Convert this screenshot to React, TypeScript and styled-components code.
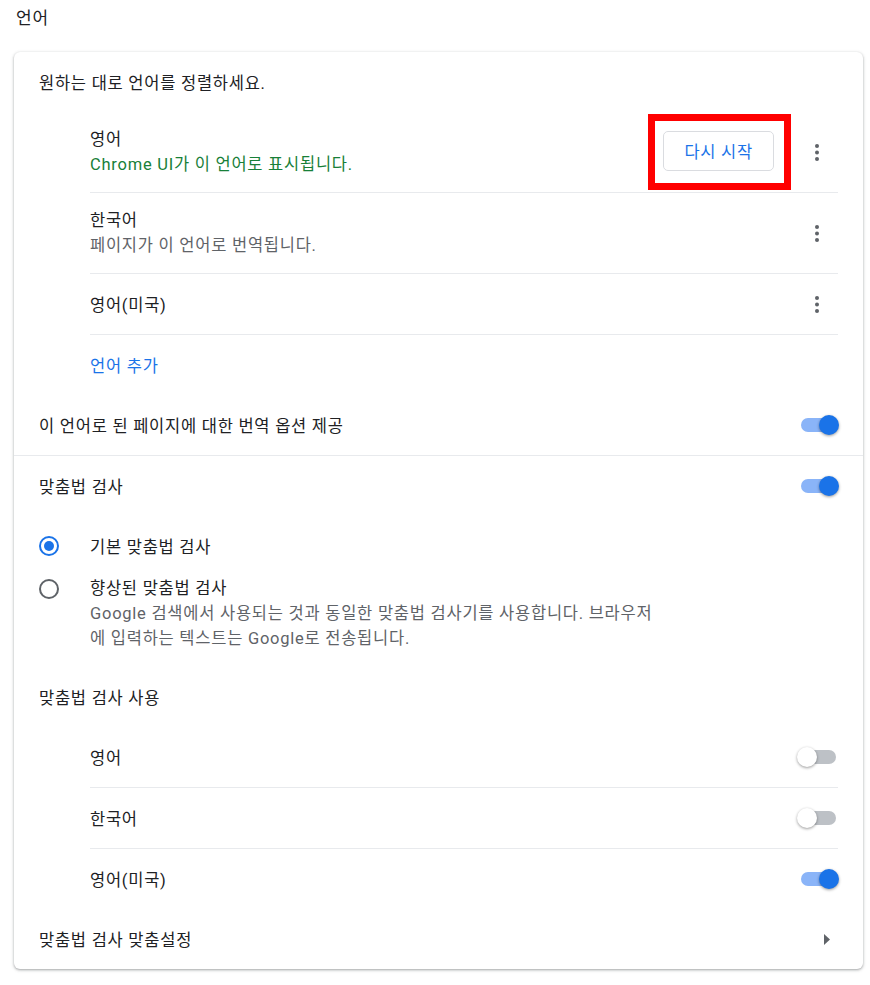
import React from 'react';
import styled, { createGlobalStyle } from 'styled-components';

const GlobalStyle = createGlobalStyle`
  body {
    margin: 0;
    background: #ffffff;
    font-family: Roboto, "Noto Sans CJK KR", sans-serif;
    color: #202124;
    letter-spacing: 0.75px;
  }
`;

const Page = styled.div`
  width: 870px;
  padding-bottom: 15px;
`;

const Title = styled.h2`
  margin: 0 0 16px;
  padding: 6px 16px;
  font-size: 17px;
  font-weight: 400;
  line-height: 24px;
`;

const Card = styled.section`
  margin-left: 14px;
  width: 849px;
  background: #fff;
  border-radius: 6px;
  box-shadow: 0 1px 2px 0 rgba(60, 64, 67, 0.3), 0 1px 3px 1px rgba(60, 64, 67, 0.15);
  overflow: hidden;
`;

const Row = styled.div<{ $divider?: boolean }>`
  display: flex;
  align-items: center;
  min-height: 60px;
  padding: 0 25px;
  font-size: 16.5px;
  border-top: ${p => (p.$divider ? '1px solid #e8eaed' : 'none')};
`;

const Grow = styled.div`
  flex: 1;
`;

const List = styled.div`
  padding: 0 25px 0 76px;
`;

const Item = styled.div<{ $divider?: boolean; $tall?: boolean }>`
  display: flex;
  align-items: center;
  min-height: ${p => (p.$tall ? '80px' : '60px')};
  font-size: 16.5px;
  border-top: ${p => (p.$divider ? '1px solid #e8eaed' : 'none')};
`;

const Primary = styled.div`
  line-height: 25px;
`;

const Secondary = styled.div<{ $tone?: 'green' | 'grey' }>`
  line-height: 25px;
  color: ${p => (p.$tone === 'green' ? '#188038' : '#5f6368')};
`;

const Link = styled.a`
  color: #1a73e8;
  text-decoration: none;
  cursor: pointer;
`;

const Highlight = styled.span`
  display: inline-flex;
  border: 7px solid #ff0000;
  padding: 10px 10px 12px 8px;
  margin-right: 5px;
`;

const OutlineButton = styled.button`
  height: 40px;
  padding: 0 20px;
  border: 1px solid #dadce0;
  border-radius: 5px;
  background: #fff;
  color: #1a73e8;
  font-family: inherit;
  font-size: 16.5px;
  letter-spacing: 0.75px;
  cursor: pointer;
`;

const IconButton = styled.button`
  width: 42px;
  height: 42px;
  display: flex;
  align-items: center;
  justify-content: center;
  border: none;
  background: none;
  padding: 0;
  cursor: pointer;
`;

const ToggleWrap = styled.span`
  position: relative;
  display: inline-block;
  width: 42px;
  height: 20px;
  margin-right: -1px;
`;

const Track = styled.span<{ $on: boolean }>`
  position: absolute;
  left: 4px;
  top: 3px;
  width: 35px;
  height: 14px;
  border-radius: 7px;
  background: ${p => (p.$on ? '#8ab4f8' : '#bdc1c6')};
`;

const Knob = styled.span<{ $on: boolean }>`
  position: absolute;
  top: 0;
  left: ${p => (p.$on ? '22px' : '0')};
  width: 20px;
  height: 20px;
  border-radius: 50%;
  background: ${p => (p.$on ? '#1a73e8' : '#ffffff')};
  box-shadow: 0 1px 3px rgba(0, 0, 0, 0.4);
`;

const RadioRow = styled.div<{ $multi?: boolean }>`
  display: flex;
  align-items: ${p => (p.$multi ? 'flex-start' : 'center')};
  min-height: 60px;
  padding: ${p => (p.$multi ? '0 25px 16px' : '0 25px')};
  font-size: 16.5px;
`;

const RadioCol = styled.div<{ $multi?: boolean }>`
  width: 51px;
  flex-shrink: 0;
  display: flex;
  align-items: center;
  height: ${p => (p.$multi ? '25px' : 'auto')};
`;

const RadioCircle = styled.span<{ $checked: boolean }>`
  box-sizing: border-box;
  width: 20px;
  height: 20px;
  border-radius: 50%;
  border: 2.5px solid ${p => (p.$checked ? '#1a73e8' : '#5f6368')};
  display: flex;
  align-items: center;
  justify-content: center;
  &::after {
    content: '';
    width: 10px;
    height: 10px;
    border-radius: 50%;
    background: ${p => (p.$checked ? '#1a73e8' : 'transparent')};
  }
`;

const Toggle = ({ on }: { on: boolean }) => (
  <ToggleWrap>
    <Track $on={on} />
    <Knob $on={on} />
  </ToggleWrap>
);

const MoreIcon = () => (
  <IconButton aria-label="더보기">
    <svg width="4" height="17" viewBox="0 0 4 17">
      <circle cx="2" cy="2" r="2" fill="#5f6368" />
      <circle cx="2" cy="8.5" r="2" fill="#5f6368" />
      <circle cx="2" cy="15" r="2" fill="#5f6368" />
    </svg>
  </IconButton>
);

const ArrowRight = () => (
  <svg width="6" height="11" viewBox="0 0 6 11" style={{ marginRight: 8 }}>
    <path d="M0 0 L6 5.5 L0 11 Z" fill="#5f6368" />
  </svg>
);

const spellLanguages = [
  { name: '영어', on: false },
  { name: '한국어', on: false },
  { name: '영어(미국)', on: true },
];

function App() {
  return (
    <Page>
      <GlobalStyle />
      <Title>언어</Title>
      <Card>
        <Row>원하는 대로 언어를 정렬하세요.</Row>
        <List>
          <Item $tall>
            <Grow>
              <Primary>영어</Primary>
              <Secondary $tone="green">Chrome UI가 이 언어로 표시됩니다.</Secondary>
            </Grow>
            <Highlight>
              <OutlineButton>다시 시작</OutlineButton>
            </Highlight>
            <MoreIcon />
          </Item>
          <Item $tall $divider>
            <Grow>
              <Primary>한국어</Primary>
              <Secondary>페이지가 이 언어로 번역됩니다.</Secondary>
            </Grow>
            <MoreIcon />
          </Item>
          <Item $divider>
            <Grow>영어(미국)</Grow>
            <MoreIcon />
          </Item>
          <Item $divider>
            <Link>언어 추가</Link>
          </Item>
        </List>
        <Row>
          <Grow>이 언어로 된 페이지에 대한 번역 옵션 제공</Grow>
          <Toggle on />
        </Row>
        <Row $divider>
          <Grow>맞춤법 검사</Grow>
          <Toggle on />
        </Row>
        <RadioRow>
          <RadioCol>
            <RadioCircle $checked />
          </RadioCol>
          <Grow>기본 맞춤법 검사</Grow>
        </RadioRow>
        <RadioRow $multi>
          <RadioCol $multi>
            <RadioCircle $checked={false} />
          </RadioCol>
          <Grow>
            <Primary>향상된 맞춤법 검사</Primary>
            <Secondary>
              Google 검색에서 사용되는 것과 동일한 맞춤법 검사기를 사용합니다. 브라우저
              <br />
              에 입력하는 텍스트는 Google로 전송됩니다.
            </Secondary>
          </Grow>
        </RadioRow>
        <Row>맞춤법 검사 사용</Row>
        <List>
          {spellLanguages.map((lang, i) => (
            <Item key={lang.name} $divider={i > 0}>
              <Grow>{lang.name}</Grow>
              <Toggle on={lang.on} />
            </Item>
          ))}
        </List>
        <Row>
          <Grow>맞춤법 검사 맞춤설정</Grow>
          <ArrowRight />
        </Row>
      </Card>
    </Page>
  );
}

export default App;
